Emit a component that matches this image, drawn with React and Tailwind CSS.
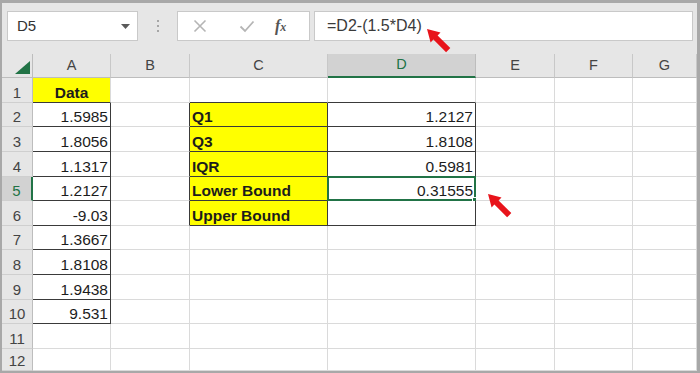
import React from 'react';

const colNames = ['A', 'B', 'C', 'D', 'E', 'F', 'G'];
const rowNums = [1, 2, 3, 4, 5, 6, 7, 8, 9, 10, 11, 12];

// cell contents keyed by "col+row"
const cells = {
  A1: { v: 'Data', bold: true, fill: true, align: 'center' },
  A2: { v: '1.5985' },
  A3: { v: '1.8056' },
  A4: { v: '1.1317' },
  A5: { v: '1.2127' },
  A6: { v: '-9.03' },
  A7: { v: '1.3667' },
  A8: { v: '1.8108' },
  A9: { v: '1.9438' },
  A10: { v: '9.531' },
  C2: { v: 'Q1', bold: true, fill: true, align: 'left' },
  C3: { v: 'Q3', bold: true, fill: true, align: 'left' },
  C4: { v: 'IQR', bold: true, fill: true, align: 'left' },
  C5: { v: 'Lower Bound', bold: true, fill: true, align: 'left' },
  C6: { v: 'Upper Bound', bold: true, fill: true, align: 'left' },
  D2: { v: '1.2127' },
  D3: { v: '1.8108' },
  D4: { v: '0.5981' },
  D5: { v: '0.31555' },
  D6: { v: '' },
};

const boxed = (c, r) => {
  if (c === 'A') return r >= 2 && r <= 10;
  if (c === 'C' || c === 'D') return r >= 2 && r <= 6;
  return false;
};

function Arrow({ className }) {
  return (
    <svg viewBox="0 0 26 26" className={className}>
      <polygon
        points="1,1 14.5,4.6 11.6,7.4 24.3,20.1 20.1,24.3 7.4,11.6 4.6,14.5"
        fill="#e8141b"
      />
    </svg>
  );
}

function Cell({ col, row }) {
  const key = col + row;
  const data = cells[key];
  const idx = colNames.indexOf(col);
  const right = colNames[idx + 1];
  const darkR = boxed(col, row) || (right && boxed(right, row));
  const darkB = boxed(col, row) || boxed(col, row + 1);
  const selected = key === 'D5';

  let align = 'justify-end pr-[2px]';
  if (data && data.align === 'center') align = 'justify-center';
  if (data && data.align === 'left') align = 'justify-start pl-[2px]';

  return (
    <div
      className={[
        'relative flex items-end pb-[1px] border-r border-b text-[15.5px] leading-[16px] text-[#1c1c1c] whitespace-nowrap',
        darkR ? 'border-r-[#3a3a3a]' : 'border-r-[#dadada]',
        darkB ? 'border-b-[#3a3a3a]' : 'border-b-[#dadada]',
        data && data.fill ? 'bg-[#ffff00]' : 'bg-white',
        data && data.bold ? 'font-bold' : '',
        align,
      ].join(' ')}
    >
      {data ? data.v : ''}
      {selected && (
        <div className="absolute -left-px -top-px -right-px -bottom-px border-2 border-[#217346]">
          <div className="absolute -right-[4px] -bottom-[4px] w-[6px] h-[6px] bg-[#217346] border border-white" />
        </div>
      )}
    </div>
  );
}

export default function App() {
  return (
    <div className="relative w-[700px] h-[373px] overflow-hidden bg-white border-l-2 border-r-[3px] border-t-[3px] border-b-2 border-[#a8a8a8] font-['Liberation_Sans',Arial,sans-serif]">
      {/* formula bar */}
      <div className="h-[51px] bg-[#e6e6e6] flex items-start pt-[8px] pl-[5px] pr-[4px]">
        <div className="w-[131px] h-[30px] bg-white border border-[#c9c9c9] flex items-center justify-between pl-[9px] pr-[7px]">
          <span className="text-[15px] text-[#333]">D5</span>
          <svg width="9" height="5" viewBox="0 0 9 5">
            <polygon points="0,0 9,0 4.5,5" fill="#5a5a5a" />
          </svg>
        </div>
        <div className="w-[39px] h-[30px] flex flex-col items-center justify-center gap-[3px]">
          <div className="w-[2px] h-[2px] bg-[#a6a6a6]" />
          <div className="w-[2px] h-[2px] bg-[#a6a6a6]" />
          <div className="w-[2px] h-[2px] bg-[#a6a6a6]" />
        </div>
        <div className="w-[133px] h-[30px] bg-white border border-[#c9c9c9] flex items-center pl-[15px]">
          <svg width="14" height="14" viewBox="0 0 14 14">
            <path d="M1.5 1.5 L12.5 12.5 M12.5 1.5 L1.5 12.5" stroke="#b5b5b5" strokeWidth="1.6" fill="none" />
          </svg>
          <svg width="16" height="14" viewBox="0 0 16 14" className="ml-[32px]">
            <path d="M1.5 7.5 L6 12 L14.5 2.5" stroke="#b5b5b5" strokeWidth="1.8" fill="none" />
          </svg>
          <span className="ml-[20px] font-['Liberation_Serif',serif] italic font-bold text-[16px] text-[#555] leading-none">
            f<span className="text-[12px]">x</span>
          </span>
        </div>
        <div className="flex-1 h-[30px] ml-[4px] bg-white border border-[#c9c9c9] flex items-center pl-[12px]">
          <span className="text-[16px] text-[#3a3a3a]">=D2-(1.5*D4)</span>
        </div>
      </div>

      {/* sheet */}
      <div className="grid grid-cols-[31px_78px_79px_138px_148px_79px_78px_1fr] grid-rows-[24px_25px_24px_25px_25px_24px_25px_24px_25px_25px_24px_25px_1fr] h-[317px]">
        {/* corner */}
        <div className="bg-[#e6e6e6] border-r border-b border-[#bdbdbd] flex items-end justify-end pr-[2px] pb-[3px]">
          <svg width="15" height="13" viewBox="0 0 15 13">
            <polygon points="15,0 15,13 0,13" fill="#217346" />
          </svg>
        </div>
        {colNames.map((c) =>
          c === 'D' ? (
            <div
              key={c}
              className="bg-[#d2d2d2] border-r border-r-[#bdbdbd] border-b-2 border-b-[#217346] flex items-center justify-center text-[14.5px] text-[#217346]"
            >
              {c}
            </div>
          ) : (
            <div
              key={c}
              className="bg-[#e6e6e6] border-r border-r-[#c8c8c8] border-b border-b-[#bdbdbd] flex items-center justify-center text-[14.5px] text-[#444]"
            >
              {c}
            </div>
          )
        )}

        {rowNums.map((r) => (
          <React.Fragment key={r}>
            {r === 5 ? (
              <div className="bg-[#d2d2d2] border-r-2 border-r-[#217346] border-b border-b-[#cfcfcf] flex items-end justify-center pb-[1px] text-[15px] leading-[16px] text-[#217346]">
                {r}
              </div>
            ) : (
              <div className="bg-[#e6e6e6] border-r border-r-[#bdbdbd] border-b border-b-[#cfcfcf] flex items-end justify-center pb-[1px] text-[15px] leading-[16px] text-[#444]">
                {r}
              </div>
            )}
            {colNames.map((c) => (
              <Cell key={c + r} col={c} row={r} />
            ))}
          </React.Fragment>
        ))}
      </div>

      <Arrow className="absolute left-[424px] top-[25px] w-[26px] h-[26px]" />
      <Arrow className="absolute left-[485px] top-[190px] w-[26px] h-[26px]" />
    </div>
  );
}
